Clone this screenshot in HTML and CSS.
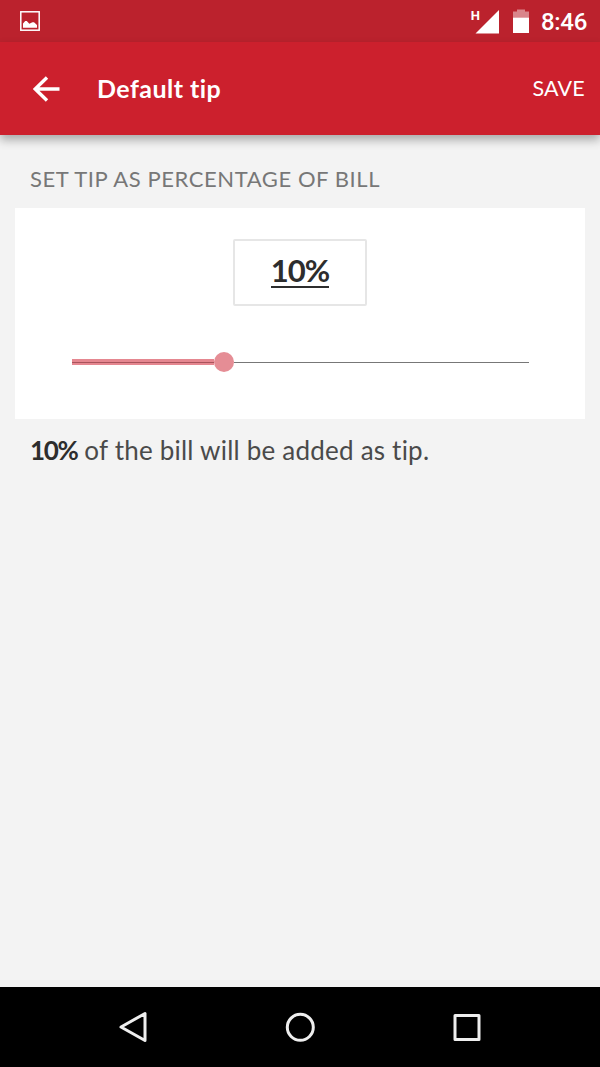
FILE: index.html
```html
<!DOCTYPE html>
<html lang="en">
<head>
<meta charset="UTF-8">
<meta name="viewport" content="width=device-width, initial-scale=1.0">
<title>Default tip</title>
<link rel="stylesheet" href="styles.css">
</head>
<body>

<div class="status-bar">
    <svg class="picture-icon" width="20" height="20" viewBox="0 0 20 20">
        <rect x="0.8" y="0.8" width="18.4" height="18.4" fill="none" stroke="#fff" stroke-width="1.5"/>
        <path d="M3 16.8V12.5L5.2 10H6.8L9.3 12.7L12.5 11.3H14L17 14V16.8Z" fill="#fff"/>
    </svg>
    <div class="status-right">
        <span class="network">H</span>
        <svg class="signal-icon" width="24" height="24" viewBox="0 0 24 24">
            <path d="M24 0V23.5H0.5Z" fill="#fff"/>
        </svg>
        <svg class="battery-icon" width="16" height="24" viewBox="0 0 16 24">
            <path d="M0 7.5V1.5H4V-0.5H12V1.5H16V7.5Z" fill="#fff" fill-opacity="0.45"/>
            <rect y="7.5" width="16" height="15.5" fill="#fff"/>
        </svg>
        <span class="clock">8:46</span>
    </div>
</div>

<header class="app-bar">
    <svg class="back-icon" width="27" height="26" viewBox="0 0 27 26">
        <path d="M14 1.5L2.2 13L14 24.5M2.2 13H26.5" fill="none" stroke="#fff" stroke-width="3.4"/>
    </svg>
    <h1 class="title">Default tip</h1>
    <span class="save">SAVE</span>
</header>

<main class="content">
    <h2 class="label">SET TIP AS PERCENTAGE OF BILL</h2>
    <div class="card">
        <div class="tip-box"><span class="tip-value">10%</span></div>
        <div class="slider">
            <div class="slider-fill"></div>
            <div class="slider-thumb"></div>
            <div class="slider-rest"></div>
        </div>
    </div>
    <p class="summary"><b>10%</b> <span class="summary-text">of the bill will be added as tip.</span></p>
</main>

<nav class="nav-bar">
    <svg width="30" height="34" viewBox="0 0 30 34">
        <path d="M27 3.5V30.5L3 17Z" fill="none" stroke="#eee" stroke-width="3" stroke-linejoin="round"/>
    </svg>
    <svg width="30" height="30" viewBox="0 0 30 30">
        <circle cx="15.3" cy="15.3" r="13" fill="none" stroke="#eee" stroke-width="3"/>
    </svg>
    <svg width="30" height="30" viewBox="0 0 30 30">
        <rect x="3" y="3.4" width="24" height="24" fill="none" stroke="#eee" stroke-width="3" stroke-linejoin="round"/>
    </svg>
</nav>

</body>
</html>
```
FILE: styles.css
```css
* {
    box-sizing: border-box;
}

body {
    margin: 0;
    height: 100vh;
    display: flex;
    flex-direction: column;
    background-color: #f3f3f3;
    font-family: Lato, sans-serif;
    font-variant-ligatures: none;
}

/* Android status bar */
.status-bar {
    height: 42px;
    padding: 0 13px 0 20px;
    display: flex;
    justify-content: space-between;
    align-items: center;
    background-color: #bb222d;
    color: #fff;
}

.status-right {
    display: flex;
    align-items: center;
    padding-top: 1px;
}

.network {
    font: bold 13px/13px Roboto, sans-serif;
    align-self: flex-start;
    margin: 1px -5px 0 0;
}

.signal-icon {
    margin-right: 14px;
}

.battery-icon {
    margin-right: 12px;
    overflow: visible;
}

.clock {
    font: 500 24px/28px Roboto, sans-serif;
    letter-spacing: -0.3px;
}

/* Red bar with the title */
.app-bar {
    height: 93px;
    padding: 0 15px 2px 33px;
    display: flex;
    align-items: center;
    background-color: #cc202d;
    color: #fff;
    box-shadow: 0 5px 9px rgba(0, 0, 0, 0.3);
}

.back-icon {
    margin-top: 2px;
}

.title {
    flex: 1;
    margin: 0 0 0 37px;
    font-size: 25px;
    line-height: 30px;
    font-weight: bold;
    letter-spacing: 0.45px;
}

.save {
    font-size: 21.5px;
    letter-spacing: 0.2px;
}

.content {
    flex: 1;
    padding: 29px 15px 0;
}

.label {
    margin: 0 0 15px 15px;
    font-size: 22px;
    line-height: 29px;
    font-weight: normal;
    letter-spacing: 0.58px;
    color: #777;
}

.card {
    height: 211px;
    padding: 31px 56px 0;
    background-color: #fff;
}

.tip-box {
    width: 134px;
    height: 67px;
    margin: 0 auto;
    display: flex;
    justify-content: center;
    align-items: center;
    border: 2px solid #e6e6e6;
    border-radius: 2px;
}

.tip-value {
    margin-top: -3px;
    padding-top: 1px;
    font-size: 31px;
    line-height: 31px;
    font-weight: bold;
    letter-spacing: -0.9px;
    color: #2d2d2d;
    border-bottom: 2px solid #2d2d2d;
}

.slider {
    height: 20px;
    margin-top: 46px;
    display: flex;
    align-items: center;
}

.slider-fill {
    width: 142px;
    height: 6px;
    margin-left: 1px;
    background: linear-gradient(#e58790 3px, #a9545c 3px, #a9545c 4px, #e58790 4px);
}

.slider-thumb {
    width: 20px;
    height: 20px;
    border-radius: 50%;
    background-color: #e58d95;
}

.slider-rest {
    flex: 1;
    height: 1px;
    background-color: #777;
}

.summary {
    margin: 14px 0 0 15px;
    font-size: 26px;
    line-height: 34px;
    color: #4a4a4a;
}

.summary b {
    letter-spacing: -1.3px;
    color: #2d2d2d;
}

.summary-text {
    letter-spacing: 0.22px;
}

/* Android navigation buttons */
.nav-bar {
    height: 80px;
    padding: 0 118px;
    display: flex;
    justify-content: space-between;
    align-items: center;
    background-color: #000;
}
```
